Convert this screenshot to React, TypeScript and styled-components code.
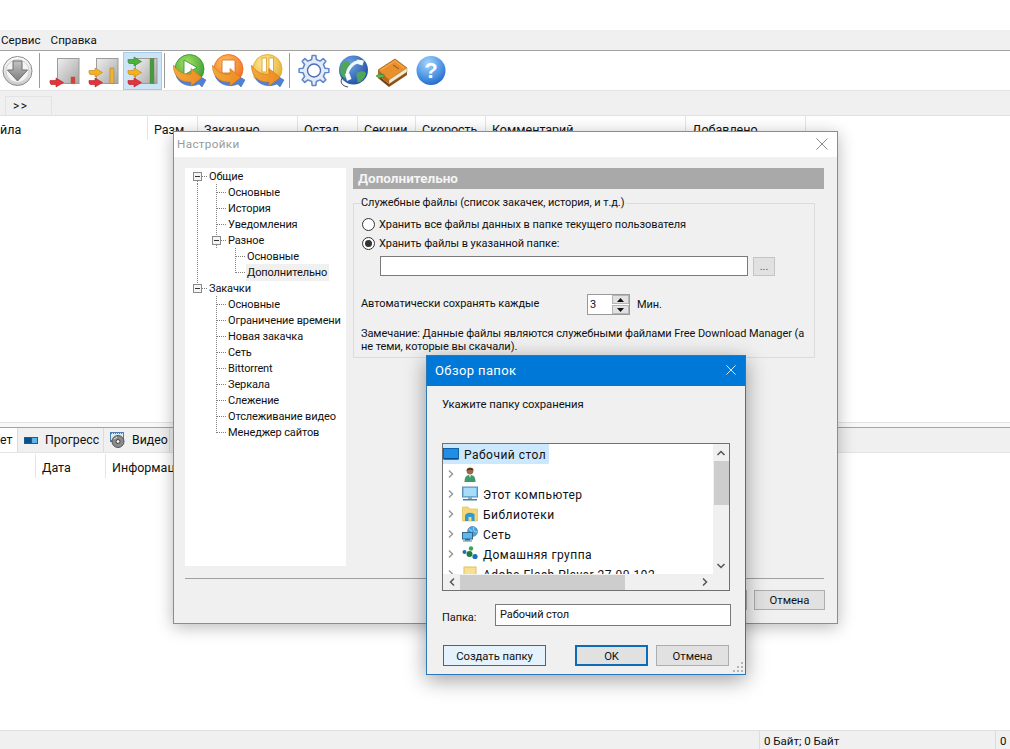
import React from 'react';
import styled, { createGlobalStyle } from 'styled-components';

const UI_FONT = 'Roboto, "Liberation Sans", sans-serif';

const GlobalStyle = createGlobalStyle`
  * { box-sizing: border-box; }
  html, body { margin: 0; padding: 0; background: #fff; overflow: hidden; }
  body { font-family: ${UI_FONT}; font-size: 11px; letter-spacing: -0.07px; color: #111; }
`;

const Page = styled.div`
  position: relative;
  width: 1010px;
  height: 749px;
  display: flex;
  flex-direction: column;
  overflow: hidden;
  background: #fff;
`;

const TopGap = styled.div`
  height: 30px;
`;

const MenuBar = styled.div`
  height: 21px;
  background: #f0f0f0;
  border-bottom: 1px solid #a3a3a3;
  display: flex;
  align-items: center;
  gap: 10px;
  padding: 0 0 1px 1px;
  font-size: 11.6px;
  letter-spacing: 0;
`;

const Toolbar = styled.div`
  height: 39px;
  display: flex;
  align-items: center;
`;

const ToolButton = styled.div<{ $w?: number; $active?: boolean }>`
  width: ${p => p.$w ?? 39}px;
  height: 38px;
  display: flex;
  align-items: center;
  justify-content: center;
  flex: none;
  background: ${p => (p.$active ? '#cde4f7' : 'transparent')};
  border: 1px solid ${p => (p.$active ? '#a3cdea' : 'transparent')};
`;

const ToolSep = styled.div<{ $before: number; $after: number }>`
  width: 1px;
  height: 35px;
  background: #9a9a9a;
  margin-left: ${p => p.$before}px;
  margin-right: ${p => p.$after}px;
  flex: none;
`;

const TabStrip = styled.div`
  height: 26px;
  background: #f0f0f0;
  border-top: 1px solid #e4e4e4;
  border-bottom: 1px solid #e0e0e0;
  padding: 5px 0 0 5px;
  display: flex;
`;

const MoreTab = styled.div`
  width: 47px;
  height: 20px;
  border: 1px solid #e3e3e3;
  border-bottom: none;
  padding-left: 7px;
  font-size: 12px;
  letter-spacing: 0.12em;
  line-height: 19px;
`;

const ListArea = styled.div`
  height: 306px;
  flex: none;
  background: #fff;
`;

const HeaderRow = styled.div<{ $h: number }>`
  height: ${p => p.$h}px;
  display: flex;
`;

const HeaderCell = styled.div<{ $w: number; $pad?: number }>`
  width: ${p => p.$w}px;
  flex: none;
  padding-left: ${p => p.$pad ?? 6}px;
  border-right: 1px solid #e5e5e5;
  white-space: nowrap;
  overflow: hidden;
  line-height: 27px;
  font-size: 12.5px;
  letter-spacing: 0;
`;

const Splitter = styled.div`
  height: 6px;
  background: #f8f8f8;
  border-top: 1px solid #e3e3e3;
  border-bottom: 1px solid #a3a3a3;
  flex: none;
`;

const BottomTabs = styled.div`
  height: 25px;
  background: #f0f0f0;
  border-bottom: 1px solid #e3e3e3;
  display: flex;
  flex: none;
`;

const BottomTab = styled.div<{ $w: number; $active?: boolean; $gap: number }>`
  width: ${p => p.$w}px;
  background: ${p => (p.$active ? '#fff' : 'transparent')};
  border-right: 1px solid #dcdcdc;
  display: flex;
  align-items: center;
  gap: ${p => p.$gap}px;
  padding-left: ${p => (p.$active ? 0 : 6)}px;
  font-size: 12.3px;
  letter-spacing: 0;
`;

const LogArea = styled.div`
  flex: 1;
  background: #fff;
  padding-top: 1px;
`;

const StatusBar = styled.div`
  height: 19px;
  background: #f0f0f0;
  border-top: 1px solid #dfdfdf;
  display: flex;
  align-items: center;
  font-size: 11.5px;
  letter-spacing: 0;
  flex: none;
`;

const StatusCell = styled.div<{ $w?: number; $grow?: boolean }>`
  height: 100%;
  ${p => (p.$grow ? 'flex: 1;' : `width: ${p.$w}px;`)}
  padding-left: 4px;
  border-left: ${p => (p.$grow ? 'none' : '1px solid #dcdcdc')};
  white-space: nowrap;
  line-height: 20px;
`;

/* windows float over the main window */
const SettingsWindow = styled.div`
  position: absolute;
  left: 173px;
  top: 131px;
  width: 665px;
  height: 493px;
  background: #f0f0f0;
  border: 1px solid #8c8c8c;
  box-shadow: 0 3px 16px rgba(0, 0, 0, 0.28);
  display: flex;
  flex-direction: column;
`;

const SettingsTitle = styled.div`
  height: 25px;
  background: #fff;
  color: #9a9a9a;
  display: flex;
  align-items: center;
  justify-content: space-between;
  padding: 0 9px 2px 3px;
  font-size: 11.7px;
  letter-spacing: 0.03em;
  flex: none;
`;

const SettingsBody = styled.div`
  flex: 1;
  display: flex;
  flex-direction: column;
  padding: 11px 13px 0 11px;
`;

const SettingsMain = styled.div`
  height: 398px;
  display: flex;
  gap: 7px;
`;

const TreePanel = styled.div`
  width: 161px;
  background: #fff;
  flex: none;
`;

const TreeRow = styled.div`
  height: 16px;
  display: flex;
  align-items: center;
  padding-left: 3px;
`;

const TreeLabel = styled.span<{ $selected?: boolean }>`
  margin-left: 1px;
  padding: 0 2px 0 1px;
  height: 17px;
  line-height: 18px;
  white-space: nowrap;
  letter-spacing: -0.12px;
  background: ${p => (p.$selected ? '#f0f0f0' : 'transparent')};
`;

const OptionsPane = styled.div`
  flex: 1;
  display: flex;
  flex-direction: column;
`;

const PaneHeader = styled.div`
  height: 21px;
  background: #a9a9a9;
  color: #f4f4f4;
  font-weight: 700;
  font-size: 13.5px;
  letter-spacing: 0;
  line-height: 20px;
  padding-left: 5px;
  flex: none;
`;

const GroupBox = styled.fieldset`
  width: 462px;
  height: 163px;
  margin: 6px 0 0;
  padding: 0 7px 0 7px;
  border: 1px solid #dcdcdc;
  min-width: 0;
`;

const GroupLegend = styled.legend`
  padding: 0 2px 0 0;
  height: 16px;
  line-height: 16px;
`;

const RadioRow = styled.div<{ $top: number }>`
  display: flex;
  align-items: center;
  gap: 4px;
  height: 16px;
  padding-left: 1px;
  margin-top: ${p => p.$top}px;
`;

const Radio = styled.span<{ $on?: boolean }>`
  width: 13px;
  height: 13px;
  border-radius: 50%;
  border: 1px solid #333;
  background: #fff;
  display: flex;
  align-items: center;
  justify-content: center;
  flex: none;
  &::after {
    content: '';
    width: 7px;
    height: 7px;
    border-radius: 50%;
    background: ${p => (p.$on ? '#333' : 'transparent')};
  }
`;

const PathRow = styled.div`
  display: flex;
  align-items: center;
  gap: 5px;
  margin: 5px 0 0 19px;
`;

const PathInput = styled.div`
  width: 368px;
  height: 20px;
  background: #fff;
  border: 1px solid #7a7a7a;
`;

const BrowseButton = styled.div`
  width: 22px;
  height: 19px;
  background: #e1e1e1;
  border: 1px solid #c4c4c4;
  color: #555;
  text-align: center;
  line-height: 17px;
  font-size: 11px;
`;

const AutoRow = styled.div`
  display: flex;
  align-items: center;
  height: 21px;
  margin-top: 18px;
`;

const AutoLabel = styled.span`
  width: 226px;
  padding-bottom: 3px;
  flex: none;
`;

const Spinner = styled.div`
  width: 43px;
  height: 21px;
  display: flex;
  border: 1px solid #9a9a9a;
  background: #fff;
  flex: none;
`;

const SpinnerValue = styled.span`
  flex: 1;
  padding-left: 2px;
  line-height: 19px;
`;

const SpinnerButtons = styled.div`
  width: 17px;
  display: flex;
  flex-direction: column;
  gap: 1px;
`;

const SpinnerButton = styled.div`
  flex: 1;
  background: #e1e1e1;
  border: 1px solid #b5b5b5;
  display: flex;
  align-items: center;
  justify-content: center;
`;

const UnitLabel = styled.span`
  margin-left: 7px;
`;

const NoteText = styled.div`
  margin-top: 12px;
  line-height: 13px;
  white-space: nowrap;
`;

const SettingsRule = styled.div`
  height: 1px;
  background: #a0a0a0;
  margin-top: 12px;
`;

const SettingsFooter = styled.div`
  display: flex;
  justify-content: flex-end;
  gap: 7px;
  margin: 11px -1px 0 0;
`;

const DialogButton = styled.div<{ $w: number; $h?: number; $mode?: 'plain' | 'hover' | 'default' }>`
  width: ${p => p.$w}px;
  height: ${p => p.$h ?? 21}px;
  display: flex;
  align-items: center;
  justify-content: center;
  padding-top: 1px;
  font-size: 11.3px;
  background: ${p => (p.$mode === 'hover' ? '#e5f1fb' : '#e1e1e1')};
  border: ${p =>
    p.$mode === 'default'
      ? '2px solid #0f6cb4'
      : p.$mode === 'hover'
        ? '1px solid #0078d7'
        : '1px solid #adadad'};
  flex: none;
`;

const BrowseWindow = styled.div`
  position: absolute;
  left: 426px;
  top: 355px;
  width: 320px;
  height: 320px;
  background: #f0f0f0;
  border: 1px solid #2a78b8;
  box-shadow: 0 5px 20px rgba(0, 0, 0, 0.38);
  display: flex;
  flex-direction: column;
`;

const BrowseTitle = styled.div`
  height: 30px;
  background: #0078d7;
  color: #fff;
  display: flex;
  align-items: center;
  justify-content: space-between;
  padding: 0 9px 2px 8px;
  font-size: 13px;
  letter-spacing: 0.03em;
  flex: none;
`;

const BrowseBody = styled.div`
  flex: 1;
  display: flex;
  flex-direction: column;
  padding: 10px 14px 0 15px;
  position: relative;
`;

const Prompt = styled.div`
  height: 16px;
  line-height: 18px;
  font-size: 11.3px;
`;

const FolderTree = styled.div`
  width: 288px;
  height: 148px;
  margin-top: 31px;
  border: 1px solid #707070;
  background: #fff;
  display: flex;
  flex-direction: column;
`;

const FolderTop = styled.div`
  height: 130px;
  display: flex;
`;

const FolderList = styled.div`
  flex: 1;
  overflow: hidden;
  font-size: 12px;
  letter-spacing: 0.04em;
`;

const FolderRow = styled.div<{ $selected?: boolean; $root?: boolean }>`
  height: 20px;
  width: ${p => (p.$root ? 'fit-content' : 'auto')};
  display: flex;
  align-items: center;
  padding-right: 3px;
  white-space: nowrap;
  background: ${p => (p.$selected ? '#cce8ff' : 'transparent')};
`;

const FolderText = styled.span`
  padding-top: 2px;
`;

const FolderChevron = styled.div`
  width: 19px;
  display: flex;
  justify-content: center;
  padding-right: 3px;
  flex: none;
`;

const FolderIconBox = styled.div`
  width: 16px;
  height: 16px;
  margin-right: 5px;
  flex: none;
`;

const VScroll = styled.div`
  width: 16px;
  background: #f0f0f0;
  display: flex;
  flex-direction: column;
  align-items: center;
`;

const ScrollArrow = styled.div<{ $push?: boolean }>`
  width: 16px;
  height: 17px;
  display: flex;
  align-items: center;
  justify-content: center;
  flex: none;
  ${p => (p.$push ? 'margin-top: auto;' : '')}
`;

const VThumb = styled.div`
  width: 15px;
  height: 44px;
  background: #cdcdcd;
`;

const HScroll = styled.div`
  height: 16px;
  background: #f0f0f0;
  display: flex;
  align-items: center;
`;

const HThumb = styled.div`
  width: 165px;
  height: 15px;
  background: #cdcdcd;
`;

const HArrow = styled.div<{ $push?: boolean }>`
  width: 17px;
  height: 16px;
  display: flex;
  align-items: center;
  justify-content: center;
  flex: none;
  ${p => (p.$push ? 'margin-left: auto; margin-right: 16px;' : '')}
`;

const FolderField = styled.div`
  display: flex;
  align-items: center;
  margin-top: 13px;
  height: 22px;
`;

const FolderFieldLabel = styled.span`
  width: 53px;
  padding-top: 5px;
  flex: none;
`;

const FolderInput = styled.div`
  flex: 1;
  height: 22px;
  background: #fff;
  border: 1px solid #7a7a7a;
  padding-left: 4px;
  line-height: 19px;
`;

const BrowseFooter = styled.div`
  display: flex;
  gap: 8px;
  margin: 19px 2px 0 1px;
`;

const FooterPush = styled.div`
  flex: 1;
`;

const Grip = styled.svg`
  position: absolute;
  right: 2px;
  bottom: 2px;
`;

const Guide = ({ kind }: { kind: 'line' | 'tee' | 'end' | 'blank' }) => (
  <svg width="19" height="16" viewBox="0 0 19 16" style={{ flex: 'none' }} shapeRendering="crispEdges">
    {kind !== 'blank' && (
      <path
        d={kind === 'line' ? 'M9.5 0V16' : kind === 'tee' ? 'M9.5 0V16M10 8.5H19' : 'M9.5 0V8.5M10 8.5H19'}
        stroke="#808080"
        strokeDasharray="1 1"
        fill="none"
      />
    )}
  </svg>
);

const Expander = ({ up, down }: { up?: boolean; down?: boolean }) => (
  <svg width="19" height="16" viewBox="0 0 19 16" style={{ flex: 'none' }} shapeRendering="crispEdges">
    {up && <path d="M9.5 0V4" stroke="#808080" strokeDasharray="1 1" />}
    {down && <path d="M9.5 13V16" stroke="#808080" strokeDasharray="1 1" />}
    <path d="M14 8.5H19" stroke="#808080" strokeDasharray="1 1" />
    <rect x="5.5" y="4.5" width="8" height="8" fill="#f4f4f4" stroke="#8a8a8a" />
    <path d="M7 8.5H12" stroke="#333" />
  </svg>
);

const settingsTree: { guides: ('line' | 'tee' | 'end' | 'blank')[]; label: string; exp?: 'a' | 'b' | 'c'; selected?: boolean }[] = [
  { guides: [], exp: 'a', label: 'Общие' },
  { guides: ['line', 'tee'], label: 'Основные' },
  { guides: ['line', 'tee'], label: 'История' },
  { guides: ['line', 'tee'], label: 'Уведомления' },
  { guides: ['line'], exp: 'b', label: 'Разное' },
  { guides: ['line', 'blank', 'tee'], label: 'Основные' },
  { guides: ['line', 'blank', 'end'], label: 'Дополнительно', selected: true },
  { guides: [], exp: 'c', label: 'Закачки' },
  { guides: ['blank', 'tee'], label: 'Основные' },
  { guides: ['blank', 'tee'], label: 'Ограничение времени' },
  { guides: ['blank', 'tee'], label: 'Новая закачка' },
  { guides: ['blank', 'tee'], label: 'Сеть' },
  { guides: ['blank', 'tee'], label: 'Bittorrent' },
  { guides: ['blank', 'tee'], label: 'Зеркала' },
  { guides: ['blank', 'tee'], label: 'Слежение' },
  { guides: ['blank', 'tee'], label: 'Отслеживание видео' },
  { guides: ['blank', 'end'], label: 'Менеджер сайтов' },
];

const IconSvg = ({ children, size = 32 }: { children: React.ReactNode; size?: number }) => (
  <svg width={size} height={size} viewBox={`0 0 ${size} ${size}`} style={{ display: 'block', overflow: 'visible' }}>
    {children}
  </svg>
);

const DownIcon = () => (
  <IconSvg>
    <defs>
      <linearGradient id="dn" x1="0" y1="0" x2="0" y2="1">
        <stop offset="0" stopColor="#ffffff" />
        <stop offset="1" stopColor="#c9c9c9" />
      </linearGradient>
      <linearGradient id="dna" x1="0" y1="0" x2="0" y2="1">
        <stop offset="0" stopColor="#c4c4c4" />
        <stop offset="1" stopColor="#7d7d7d" />
      </linearGradient>
    </defs>
    <circle cx="15.5" cy="16" r="14.5" fill="url(#dn)" stroke="#8b8b8b" />
    <circle cx="15.5" cy="16" r="11.5" fill="#f4f4f4" stroke="#cfcfcf" />
    <path d="M11 6H20V15H25.5L15.5 26L5.5 15H11Z" fill="url(#dna)" stroke="#6f6f6f" />
  </IconSvg>
);

const Arrow = ({ y, color, edge }: { y: number; color: string; edge: string }) => (
  <path
    d={`M1 ${y + 1.5}Q1 ${y + 1.5} 7 ${y + 1.5}V${y - 1}L14.5 ${y + 3.5}L7 ${y + 8}V${y + 5.5}H2Q0.5 ${y + 3.5} 1 ${y + 1.5}Z`}
    fill={color}
    stroke={edge}
    strokeWidth="0.6"
  />
);

const QueueIcon = ({ level }: { level: 1 | 2 | 3 }) => {
  const bar = level === 1 ? '#e23b3b' : level === 2 ? '#f2b32d' : '#3f9e3f';
  const barTop = level === 1 ? 22 : level === 2 ? 13 : 3.5;
  return (
    <IconSvg>
      <defs>
        <linearGradient id={`q${level}`} x1="0" y1="0" x2="1" y2="1">
          <stop offset="0" stopColor="#eeeeee" />
          <stop offset="1" stopColor="#a6a6a6" />
        </linearGradient>
      </defs>
      <rect x="8.5" y="3.5" width="21.5" height="25" fill={`url(#q${level})`} stroke="#9c9c9c" />
      <rect x={level === 3 ? 23 : 22} y={barTop} width="4" height={28.5 - barTop} fill={bar} stroke="#8d6a3a" strokeWidth="0.4" />
      {level === 3 && <Arrow y={3} color="#4fb03f" edge="#2c7d2c" />}
      {level >= 2 && <Arrow y={14} color="#f5b21f" edge="#c57d10" />}
      <Arrow y={24} color="#e5333a" edge="#b01d22" />
    </IconSvg>
  );
};

const CycleIcon = ({ id, light, dark, children }: { id: string; light: string; dark: string; children: React.ReactNode }) => (
  <IconSvg>
    <defs>
      <radialGradient id={id} cx="0.4" cy="0.3" r="0.8">
        <stop offset="0" stopColor={light} />
        <stop offset="1" stopColor={dark} />
      </radialGradient>
      <linearGradient id={`${id}s`} x1="0" y1="0" x2="1" y2="0">
        <stop offset="0" stopColor="#f3a93a" />
        <stop offset="1" stopColor="#ef8a22" />
      </linearGradient>
    </defs>
    <circle cx="16.5" cy="14" r="14.5" fill={`url(#${id})`} stroke={dark} strokeWidth="0.8" />
    <path d="M3 21C7 30 17 33 26 29L29 32L33 25L28 22C21 27 11 28 3 21Z" fill="#4f82d6" stroke="#3566b2" strokeWidth="0.5" />
    {children}
    <path d="M0.5 10C0 22 9 28 18 27V31L29 22.5L18 13.5V19C11 20 5 17 0.5 10Z" fill={`url(#${id}s)`} stroke="#c97414" strokeWidth="0.6" />
  </IconSvg>
);

const gearPath = (teeth: number, outer: number, inner: number, cx: number, cy: number) => {
  const pts: string[] = [];
  const step = (Math.PI * 2) / teeth;
  for (let i = 0; i < teeth; i++) {
    const a = i * step - Math.PI / 2;
    [
      [a - step * 0.27, inner],
      [a - step * 0.16, outer],
      [a + step * 0.16, outer],
      [a + step * 0.27, inner],
    ].forEach(([t, r]) => pts.push(`${(cx + Math.cos(t) * r).toFixed(2)} ${(cy + Math.sin(t) * r).toFixed(2)}`));
  }
  return `M${pts.join('L')}Z`;
};

const GearIcon = () => (
  <IconSvg>
    <path d={gearPath(8, 15, 11.2, 16, 15.5)} fill="#e3eaf8" stroke="#5f86c8" strokeWidth="1.5" strokeLinejoin="round" />
    <circle cx="16" cy="15.5" r="6.5" fill="#fff" stroke="#4b6fb2" strokeWidth="1.4" />
  </IconSvg>
);

const GlobeIcon = () => (
  <IconSvg>
    <defs>
      <radialGradient id="gl" cx="0.35" cy="0.3" r="0.9">
        <stop offset="0" stopColor="#6da6e6" />
        <stop offset="1" stopColor="#123f95" />
      </radialGradient>
    </defs>
    <circle cx="16.5" cy="15" r="14.5" fill="url(#gl)" />
    <path d="M4 10C8 5 12 5 13 9C12 14 8 14 9 20C9 25 6 24 4 19C3 16 3 13 4 10Z" fill="#4fa65a" />
    <path d="M20 18C25 15 29 16 29 19C27 25 23 28 20 27C22 24 18 22 20 18Z" fill="#4fa65a" />
    <path d="M10.5 22C9 15 16 6 23.5 7" fill="none" stroke="#f2f6fb" strokeWidth="3.2" />
    <path d="M20 4.5L27 5.5L25.5 10.5L20.5 9ZM8 19L12.5 18.5L14.5 24L10 26Z" fill="#f7fafd" />
    <path d="M6 22C2 27 5 31 11 32" fill="none" stroke="#28324a" strokeWidth="0.9" />
  </IconSvg>
);

const BookIcon = () => (
  <IconSvg>
    <path d="M2 15L19 4L31 13L13 25Z" fill="#e8902c" stroke="#a55a12" strokeWidth="0.8" />
    <path d="M5 15L19 6L28 13" fill="none" stroke="#f3b25f" strokeWidth="1" />
    <path d="M13 25L31 13V17L13 29Z" fill="#f3ead2" stroke="#b89c6a" strokeWidth="0.6" />
    <path d="M2 15V20L13 29V25Z" fill="#b76a1c" />
    <path d="M13 29L31 17V20L13 32Z" fill="#8f4f14" />
    <path d="M2 20L13 29V32L2 23Z" fill="#7a4210" />
    <path d="M17 10L23 14" stroke="#7a4210" strokeWidth="0.8" />
    <path d="M0 21L4 18V19.5H8V22.5H4V24Z" fill="#55b84c" stroke="#2d7d2b" strokeWidth="0.5" />
  </IconSvg>
);

const HelpIcon = () => (
  <IconSvg>
    <defs>
      <radialGradient id="hp" cx="0.4" cy="0.25" r="0.85">
        <stop offset="0" stopColor="#a6d4fb" />
        <stop offset="0.6" stopColor="#4a93e4" />
        <stop offset="1" stopColor="#1b5cc0" />
      </radialGradient>
    </defs>
    <circle cx="16" cy="15.5" r="14.5" fill="url(#hp)" />
    <text x="16" y="23" textAnchor="middle" fontFamily="Liberation Sans, sans-serif" fontWeight="700" fontSize="22" fill="#fff">
      ?
    </text>
  </IconSvg>
);

const ProgressIcon = () => (
  <svg width="14" height="7" viewBox="0 0 14 7" style={{ flex: 'none' }}>
    <rect width="14" height="7" fill="#0f5f9c" />
    <rect x="1" y="1" width="6" height="5" fill="#0a4f8a" />
    <rect x="8" y="1" width="5" height="5" fill="#5fb4ea" />
  </svg>
);

const VideoIcon = () => (
  <svg width="16" height="16" viewBox="0 0 16 16" style={{ flex: 'none' }}>
    <rect x="0.5" y="0.5" width="13" height="9" fill="#dfe8f2" stroke="#4a7fb5" />
    <path d="M1 1.5H13M1 8.5H13" stroke="#4a7fb5" strokeDasharray="1 1" />
    <circle cx="8" cy="9.5" r="6" fill="#8b8b8b" stroke="#555" />
    <circle cx="8" cy="9.5" r="2" fill="#eee" stroke="#444" />
    <path d="M4 7L7 5" stroke="#ddd" />
  </svg>
);

const DesktopIcon = () => (
  <IconSvg size={16}>
    <rect x="0.5" y="2.5" width="15" height="10.5" fill="#1d8fe6" stroke="#1262a8" />
    <rect x="1" y="12" width="14" height="1.5" fill="#0d4a86" />
  </IconSvg>
);

const UserIcon = () => (
  <IconSvg size={16}>
    <path d="M2.5 16C2.5 10 5 9 8 9C11 9 13.5 10 13.5 16Z" fill="#3e9a6b" />
    <path d="M7 9L8 12L9 9Z" fill="#eaf3ea" />
    <circle cx="8" cy="5" r="3.4" fill="#9a6a48" />
    <path d="M4.5 5C4.5 1.5 11.5 1 11.5 4.5C9 3.5 7 3.5 4.5 5Z" fill="#4a3120" />
  </IconSvg>
);

const MonitorIcon = () => (
  <IconSvg size={16}>
    <rect x="0.5" y="1" width="15" height="10" fill="#74c4f2" stroke="#5a8fb4" />
    <rect x="2" y="2" width="12" height="8" fill="#a7dcfa" />
    <rect x="6" y="11" width="4" height="2" fill="#8fa7b8" />
    <rect x="1" y="13" width="14" height="1.5" fill="#4f7da0" />
  </IconSvg>
);

const LibraryIcon = () => (
  <IconSvg size={16}>
    <path d="M0.5 1H6L8 3H15.5V15H0.5Z" fill="#f7d774" stroke="#dcb64c" strokeWidth="0.6" />
    <path d="M3 15V10C3 7 8 5.5 12.5 8V15H9.5V11H6.5V15Z" fill="#2f9ad6" />
  </IconSvg>
);

const NetworkIcon = () => (
  <IconSvg size={16}>
    <circle cx="10.5" cy="5.5" r="5" fill="#4aa3df" stroke="#2d74ab" strokeWidth="0.6" />
    <path d="M7 3C10 4 11 7 9 10M12 1C10 4 13 6 15 6" stroke="#bfe3f7" fill="none" strokeWidth="0.8" />
    <rect x="0.5" y="6.5" width="10" height="6.5" fill="#5bb8ec" stroke="#33678c" />
    <rect x="3" y="13" width="5" height="1.5" fill="#33678c" />
    <rect x="1" y="14.5" width="9" height="1" fill="#4f7da0" />
  </IconSvg>
);

const HomegroupIcon = () => (
  <IconSvg size={16}>
    <circle cx="2.5" cy="6" r="2" fill="#1d6fb8" />
    <circle cx="9" cy="2.5" r="2.2" fill="#35a84a" />
    <circle cx="7.5" cy="8" r="3" fill="#1f7d3a" />
    <circle cx="13" cy="10.5" r="2.6" fill="#1d6fb8" />
  </IconSvg>
);

const FolderIcon = () => (
  <IconSvg size={16}>
    <rect x="2" y="1" width="12" height="14" fill="#f9e08e" stroke="#dcbf62" />
  </IconSvg>
);

const Chevron = ({ dir, color = '#9a9a9a', w = 1.5 }: { dir: 'r' | 'l' | 'u' | 'd'; color?: string; w?: number }) => {
  const d = { r: 'M3 1.5L6.5 5L3 8.5', l: 'M7 1.5L3.5 5L7 8.5', u: 'M1.5 7L5 3.5L8.5 7', d: 'M1.5 3L5 6.5L8.5 3' }[dir];
  return (
    <svg width="10" height="10" viewBox="0 0 10 10">
      <path d={d} fill="none" stroke={color} strokeWidth={w} />
    </svg>
  );
};

const CloseGlyph = ({ color, size }: { color: string; size: number }) => (
  <svg width={size} height={size} viewBox="0 0 12 12">
    <path d="M0.5 0.5L11.5 11.5M11.5 0.5L0.5 11.5" stroke={color} strokeWidth="1" fill="none" />
  </svg>
);

const SpinArrow = ({ up }: { up?: boolean }) => (
  <svg width="7" height="4" viewBox="0 0 7 4">
    <path d={up ? 'M0 4L3.5 0L7 4Z' : 'M0 0L3.5 4L7 0Z'} fill="#111" />
  </svg>
);

const folderRows = [
  { icon: <UserIcon />, label: '' },
  { icon: <MonitorIcon />, label: 'Этот компьютер' },
  { icon: <LibraryIcon />, label: 'Библиотеки' },
  { icon: <NetworkIcon />, label: 'Сеть' },
  { icon: <HomegroupIcon />, label: 'Домашняя группа' },
  { icon: <FolderIcon />, label: 'Adobe Flash Player 27.00.192' },
];

const topColumns = [
  { w: 148, label: 'йла', pad: 0 },
  { w: 50, label: 'Разм' },
  { w: 100, label: 'Закачано' },
  { w: 60, label: 'Остал' },
  { w: 58, label: 'Секции' },
  { w: 70, label: 'Скорость' },
  { w: 200, label: 'Комментарий' },
  { w: 120, label: 'Добавлено' },
];

export default function App() {
  return (
    <Page>
      <GlobalStyle />
      <TopGap />
      <MenuBar>
        <span>Сервис</span>
        <span>Справка</span>
      </MenuBar>
      <Toolbar>
        <ToolButton $w={35}><DownIcon /></ToolButton>
        <ToolSep $before={4} $after={5} />
        <ToolButton><QueueIcon level={1} /></ToolButton>
        <ToolButton><QueueIcon level={2} /></ToolButton>
        <ToolButton $active><QueueIcon level={3} /></ToolButton>
        <ToolSep $before={2} $after={4} />
        <ToolButton>
          <CycleIcon id="cyA" light="#a8e060" dark="#2a962f">
            <path d="M11 5L24 12.5L11 20Z" fill="#fff" stroke="#2f8a34" strokeWidth="0.8" />
          </CycleIcon>
        </ToolButton>
        <ToolButton>
          <CycleIcon id="cyB" light="#ffc65a" dark="#ee6420">
            <rect x="10" y="5" width="13" height="13" rx="1" fill="#fff" stroke="#d8661c" strokeWidth="0.8" />
          </CycleIcon>
        </ToolButton>
        <ToolButton>
          <CycleIcon id="cyC" light="#fff0a0" dark="#e2a41f">
            <rect x="11" y="3" width="4.5" height="14" fill="#fff" stroke="#d89a20" strokeWidth="0.8" />
            <rect x="18" y="3" width="4.5" height="14" fill="#fff" stroke="#d89a20" strokeWidth="0.8" />
            <path d="M3 18h4v5H3zM9 20h4v5H9z" fill="#f6c53b" stroke="#c98a18" strokeWidth="0.5" />
          </CycleIcon>
        </ToolButton>
        <ToolSep $before={3} $after={4} />
        <ToolButton><GearIcon /></ToolButton>
        <ToolButton><GlobeIcon /></ToolButton>
        <ToolButton><BookIcon /></ToolButton>
        <ToolButton><HelpIcon /></ToolButton>
      </Toolbar>
      <TabStrip>
        <MoreTab>&gt;&gt;</MoreTab>
      </TabStrip>
      <ListArea>
        <HeaderRow $h={24}>
          {topColumns.map(c => (
            <HeaderCell key={c.label} $w={c.w} $pad={c.pad}>{c.label}</HeaderCell>
          ))}
        </HeaderRow>
      </ListArea>
      <Splitter />
      <BottomTabs>
        <BottomTab $w={18} $gap={0} $active>ет</BottomTab>
        <BottomTab $w={86} $gap={7}><ProgressIcon />Прогресс</BottomTab>
        <BottomTab $w={66} $gap={6}><VideoIcon />Видео</BottomTab>
      </BottomTabs>
      <LogArea>
        <HeaderRow $h={24}>
          <HeaderCell $w={36} />
          <HeaderCell $w={70}>Дата</HeaderCell>
          <HeaderCell $w={100}>Информация</HeaderCell>
        </HeaderRow>
      </LogArea>
      <StatusBar>
        <StatusCell $grow />
        <StatusCell $w={236}>0 Байт; 0 Байт</StatusCell>
        <StatusCell $w={15}>0</StatusCell>
      </StatusBar>

      <SettingsWindow>
        <SettingsTitle>
          <span>Настройки</span>
          <CloseGlyph color="#8a8a8a" size={12} />
        </SettingsTitle>
        <SettingsBody>
          <SettingsMain>
            <TreePanel>
              {settingsTree.map((row, i) => (
                <TreeRow key={i}>
                  {row.guides.map((g, k) => <Guide key={k} kind={g} />)}
                  {row.exp === 'a' && <Expander down />}
                  {row.exp === 'b' && <Expander up down />}
                  {row.exp === 'c' && <Expander up />}
                  <TreeLabel $selected={row.selected}>{row.label}</TreeLabel>
                </TreeRow>
              ))}
            </TreePanel>
            <OptionsPane>
              <PaneHeader>Дополнительно</PaneHeader>
              <GroupBox>
                <GroupLegend>Служебные файлы (список закачек, история, и т.д.)</GroupLegend>
                <RadioRow $top={5}>
                  <Radio />
                  <span>Хранить все файлы данных в папке текущего пользователя</span>
                </RadioRow>
                <RadioRow $top={3}>
                  <Radio $on />
                  <span>Хранить файлы в указанной папке:</span>
                </RadioRow>
                <PathRow>
                  <PathInput />
                  <BrowseButton>...</BrowseButton>
                </PathRow>
                <AutoRow>
                  <AutoLabel>Автоматически сохранять каждые</AutoLabel>
                  <Spinner>
                    <SpinnerValue>3</SpinnerValue>
                    <SpinnerButtons>
                      <SpinnerButton><SpinArrow up /></SpinnerButton>
                      <SpinnerButton><SpinArrow /></SpinnerButton>
                    </SpinnerButtons>
                  </Spinner>
                  <UnitLabel>Мин.</UnitLabel>
                </AutoRow>
                <NoteText>
                  Замечание: Данные файлы являются служебными файлами Free Download Manager (а
                  <br />
                  не теми, которые вы скачали).
                </NoteText>
              </GroupBox>
            </OptionsPane>
          </SettingsMain>
          <SettingsRule />
          <SettingsFooter>
            <DialogButton $w={71} $h={20}>OK</DialogButton>
            <DialogButton $w={71} $h={20}>Отмена</DialogButton>
          </SettingsFooter>
        </SettingsBody>
      </SettingsWindow>

      <BrowseWindow>
        <BrowseTitle>
          <span>Обзор папок</span>
          <CloseGlyph color="#ffffff" size={10} />
        </BrowseTitle>
        <BrowseBody>
          <Prompt>Укажите папку сохранения</Prompt>
          <FolderTree>
            <FolderTop>
              <FolderList>
                <FolderRow $selected $root>
                  <FolderIconBox><DesktopIcon /></FolderIconBox>
                  <FolderText>Рабочий стол</FolderText>
                </FolderRow>
                {folderRows.map((r, i) => (
                  <FolderRow key={i}>
                    <FolderChevron><Chevron dir="r" /></FolderChevron>
                    <FolderIconBox>{r.icon}</FolderIconBox>
                    <FolderText>{r.label}</FolderText>
                  </FolderRow>
                ))}
              </FolderList>
              <VScroll>
                <ScrollArrow><Chevron dir="u" color="#555" /></ScrollArrow>
                <VThumb />
                <ScrollArrow $push><Chevron dir="d" color="#555" /></ScrollArrow>
              </VScroll>
            </FolderTop>
            <HScroll>
              <HArrow><Chevron dir="l" color="#555" /></HArrow>
              <HThumb />
              <HArrow $push><Chevron dir="r" color="#555" /></HArrow>
            </HScroll>
          </FolderTree>
          <FolderField>
            <FolderFieldLabel>Папка:</FolderFieldLabel>
            <FolderInput>Рабочий стол</FolderInput>
          </FolderField>
          <BrowseFooter>
            <DialogButton $w={103} $mode="hover">Создать папку</DialogButton>
            <FooterPush />
            <DialogButton $w={73} $mode="default">OK</DialogButton>
            <DialogButton $w={73}>Отмена</DialogButton>
          </BrowseFooter>
          <Grip width="11" height="11" viewBox="0 0 11 11">
            <path d="M9 1h2v2H9zM5 5h2v2H5zM9 5h2v2H9zM1 9h2v2H1zM5 9h2v2H5zM9 9h2v2H9z" fill="#b5b5b5" />
          </Grip>
        </BrowseBody>
      </BrowseWindow>
    </Page>
  );
}
